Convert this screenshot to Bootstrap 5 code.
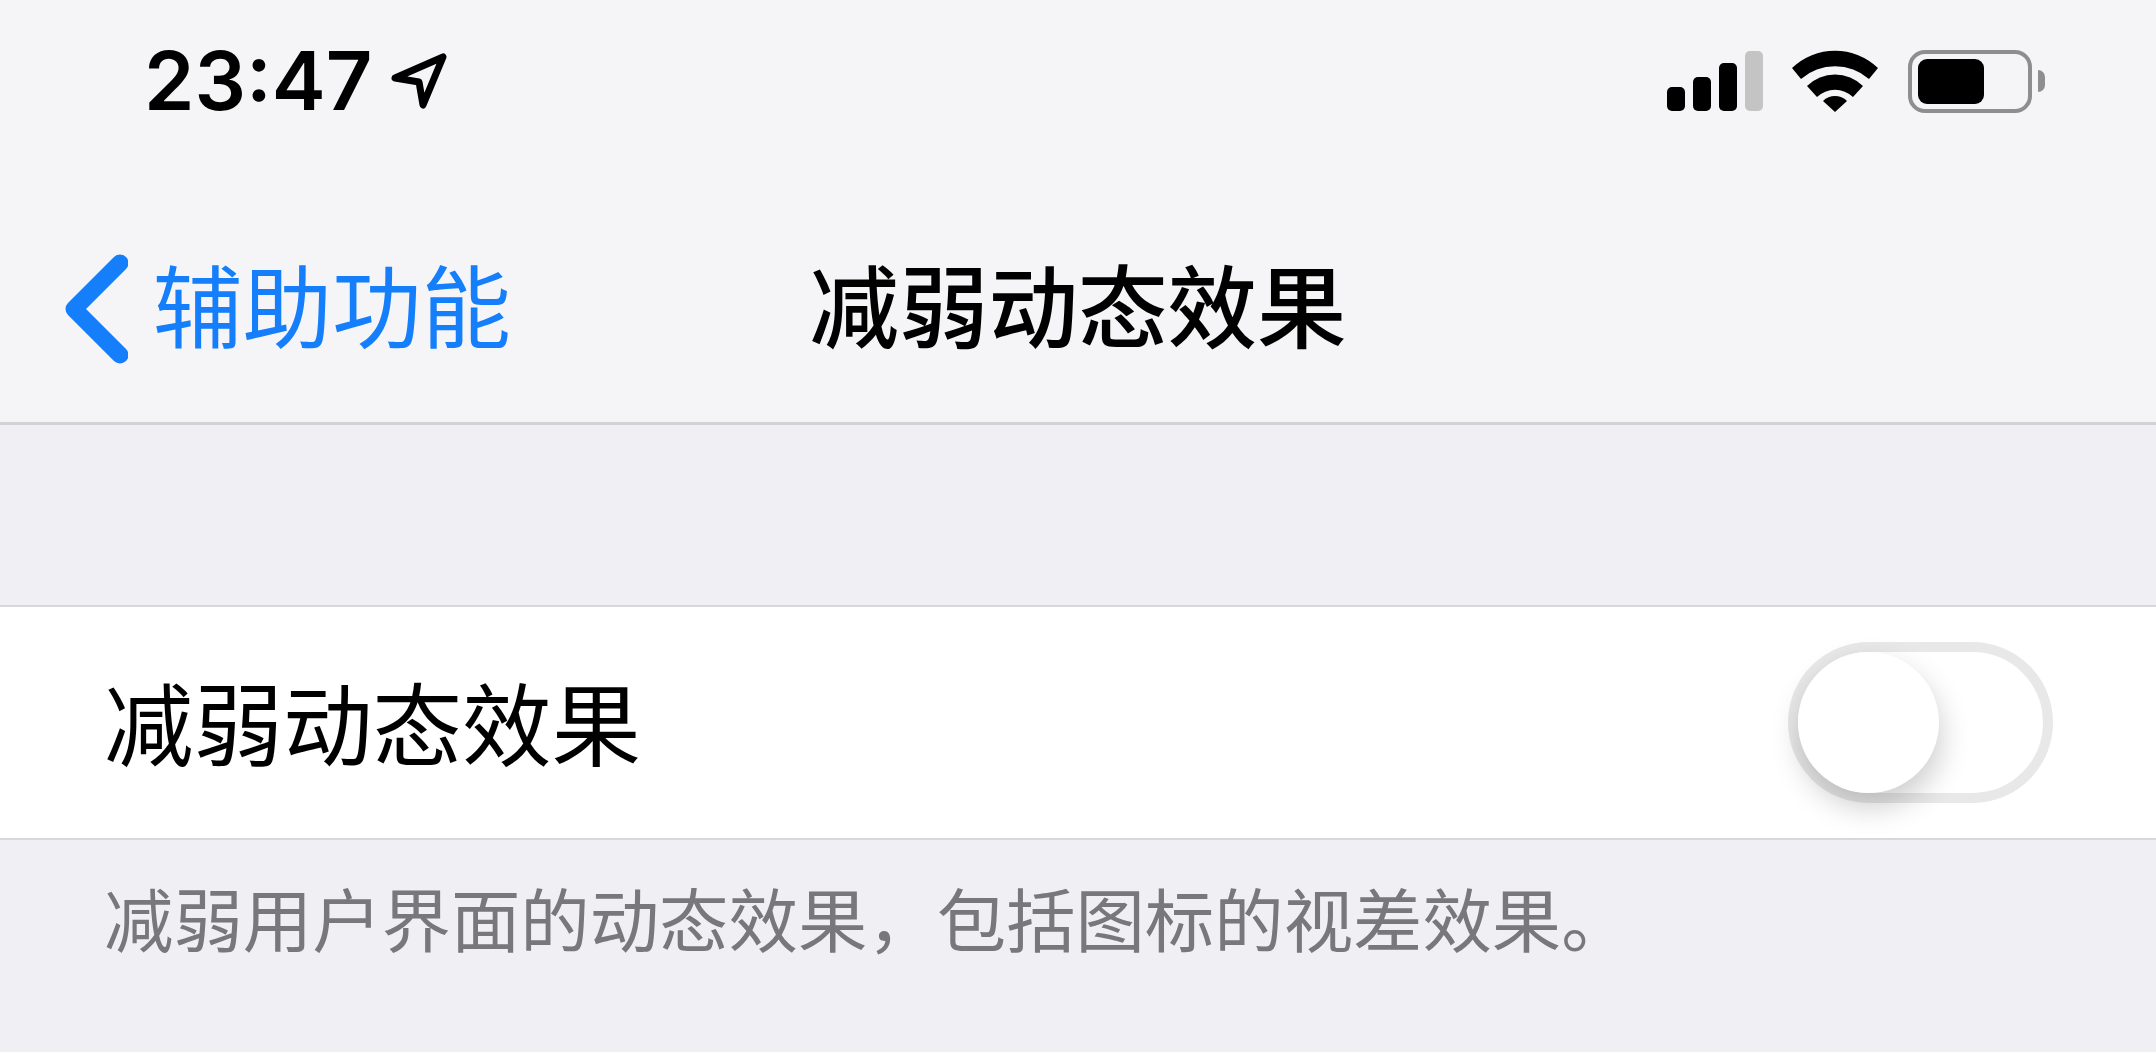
<!DOCTYPE html>
<html lang="zh-CN">
<head>
  <meta charset="UTF-8" />
  <meta name="viewport" content="width=device-width, initial-scale=1" />
  <title>减弱动态效果</title>
  <link href="https://cdn.jsdelivr.net/npm/bootstrap@5.3.0/dist/css/bootstrap.min.css" rel="stylesheet" />
  <style>
    body {
      background: #efeff4;
      font-family: "Inter", "Noto Sans CJK SC", sans-serif;
      color: #000;
      height: 1052px;
      overflow: hidden;
    }
    .top-area {
      height: 425px;
      padding-top: 50px;
      background: #f5f5f8;
      border-bottom: 3px solid #d2d2d6;
    }
    .status-row {
      height: 62px;
      padding: 0 111px 0 144px;
    }
    .clock {
      font-size: 81px;
      font-weight: 600;
      line-height: 62px;
    }
    .loc-arrow { margin-left: 19px; }
    .bars { gap: 8px; }
    .bars span { display: block; width: 18px; background: #000; border-radius: 5px; }
    .bars .b1 { height: 24px; }
    .bars .b2 { height: 34px; }
    .bars .b3 { height: 48px; }
    .bars .b4 { height: 60px; background: #c4c4c4; }
    .wifi { margin: 0 30px 0 29px; }
    .batt {
      width: 124px;
      height: 63px;
      border: 4px solid #8e8e8e;
      border-radius: 17px;
      padding: 5px 6px;
    }
    .batt-fill { width: 66px; height: 100%; background: #000; border-radius: 9px; }
    .batt-nub {
      width: 7px;
      height: 22px;
      margin-left: 6px;
      background: #8e8e8e;
      border-radius: 0 11px 11px 0;
    }
    .nav-row {
      display: grid;
      grid-template-columns: 1fr auto 1fr;
      align-items: center;
      margin-top: 137px;
      height: 120px;
      padding-left: 65px;
    }
    .back-link { color: #157efb; gap: 25px; font-size: 89.5px; line-height: 120px; text-decoration: none; }
    .page-title { font-size: 89.5px; line-height: 120px; margin: 0 65px 0 0; font-weight: 500; }
    .setting-row {
      height: 235px;
      margin-top: 180px;
      padding: 0 103px 0 104px;
      background: #fff;
      border-top: 2px solid #d8d8dc;
      border-bottom: 2px solid #d8d8dc;
      font-size: 89.5px;
    }
    .setting-label { padding-top: 10px; }
    .fake-toggle {
      width: 265px;
      height: 161px;
      border: 10px solid #e8e8e8;
      border-radius: 81px;
      background: #fff;
    }
    .fake-knob {
      width: 141px;
      height: 141px;
      background: #fff;
      border-radius: 50%;
      box-shadow: 2px 14px 30px rgba(0, 0, 0, .2);
    }
    .hint-text {
      padding: 36px 0 0 104px;
      margin: 0;
      font-size: 69.4px;
      line-height: 92px;
      color: #77777c;
    }
  </style>
</head>
<body>

  <div class="top-area">
    <div class="status-row d-flex align-items-center justify-content-between">
      <div class="d-flex align-items-center">
        <span class="clock">23:47</span>
        <svg class="loc-arrow" width="57" height="58" viewBox="0 0 57 58">
          <path d="M4 26 L52 5 L32 53 L28 30 Z" fill="none" stroke="#000" stroke-width="7" stroke-linejoin="round" />
        </svg>
      </div>
      <div class="d-flex align-items-center">
        <div class="bars d-flex align-items-end">
          <span class="b1"></span><span class="b2"></span><span class="b3"></span><span class="b4"></span>
        </div>
        <svg class="wifi" width="86" height="62" viewBox="0 0 86 62">
          <path d="M0 18 A62 62 0 0 1 86 18 L77 29 A52 52 0 0 0 9 29 Z" fill="#000" />
          <path d="M15 36 A40 40 0 0 1 71 36 L61 47 A26 26 0 0 0 25 47 Z" fill="#000" />
          <path d="M31 51 A17 17 0 0 1 55 51 L43 62 Z" fill="#000" />
        </svg>
        <div class="batt"><div class="batt-fill"></div></div>
        <div class="batt-nub"></div>
      </div>
    </div>
    <div class="nav-row">
      <a class="back-link d-flex align-items-center" href="#">
        <svg width="63" height="110" viewBox="0 0 63 110" class="flex-shrink-0">
          <path d="M55 9 L9 55 L55 101" fill="none" stroke="#157efb" stroke-width="17" stroke-linecap="round" stroke-linejoin="round" />
        </svg>
        <span>辅助功能</span>
      </a>
      <h1 class="page-title">减弱动态效果</h1>
      <div></div>
    </div>
  </div>

  <div class="setting-row d-flex align-items-center justify-content-between">
    <span class="setting-label">减弱动态效果</span>
    <div class="fake-toggle"><div class="fake-knob"></div></div>
  </div>
  <p class="hint-text">减弱用户界面的动态效果，包括图标的视差效果。</p>

  <script src="https://cdn.jsdelivr.net/npm/bootstrap@5.3.0/dist/js/bootstrap.bundle.min.js"></script>
</body>
</html>
